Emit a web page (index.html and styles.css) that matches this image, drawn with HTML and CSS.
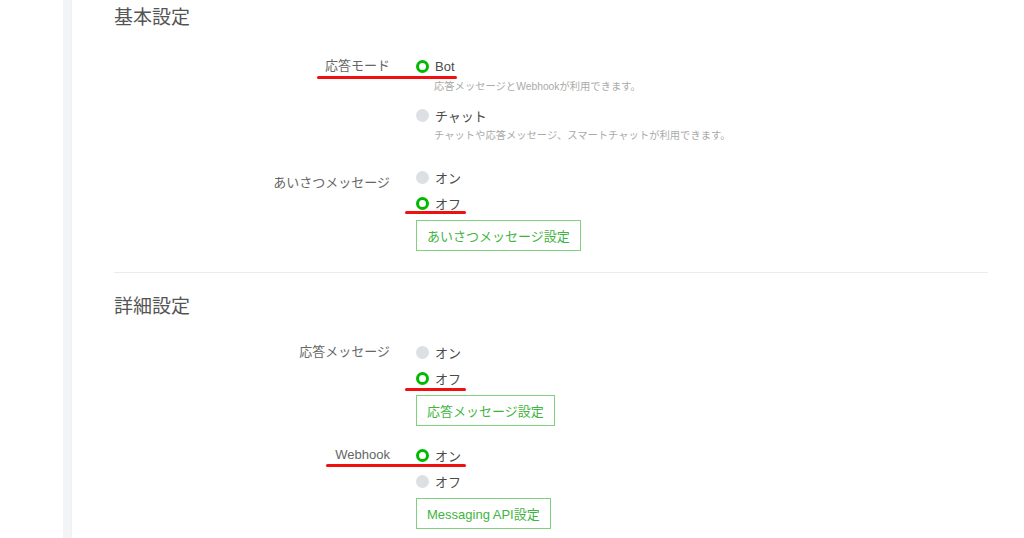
FILE: index.html
```html
<!DOCTYPE html>
<html lang="ja">
<head>
    <meta charset="UTF-8">
    <meta name="viewport" content="width=device-width, initial-scale=1.0">
    <title>応答設定</title>
    <link rel="stylesheet" href="styles.css">
</head>
<body>
    <div class="page">
        <div class="gutter"></div>
        <div class="rail"></div>
        <main class="main">
            <section class="section">
                <h2 class="section-title">基本設定</h2>

                <div class="field">
                    <div class="field-label">応答モード</div>
                    <div class="options">
                        <div class="option"><span class="radio checked"></span>Bot</div>
                        <div class="desc">応答メッセージとWebhookが利用できます。</div>
                        <div class="option"><span class="radio"></span>チャット</div>
                        <div class="desc">チャットや応答メッセージ、スマートチャットが利用できます。</div>
                    </div>
                    <span class="mark mark-row"></span>
                </div>

                <div class="field">
                    <div class="field-label field-label-low">あいさつメッセージ</div>
                    <div class="options">
                        <div class="option"><span class="radio"></span>オン</div>
                        <div class="option"><span class="radio checked"></span>オフ<span class="mark mark-option"></span></div>
                        <button class="btn">あいさつメッセージ設定</button>
                    </div>
                </div>
            </section>

            <section class="section section-next">
                <h2 class="section-title">詳細設定</h2>

                <div class="field">
                    <div class="field-label">応答メッセージ</div>
                    <div class="options">
                        <div class="option"><span class="radio"></span>オン</div>
                        <div class="option"><span class="radio checked"></span>オフ<span class="mark mark-option mark-option-low"></span></div>
                        <button class="btn">応答メッセージ設定</button>
                    </div>
                </div>

                <div class="field">
                    <div class="field-label">Webhook</div>
                    <div class="options">
                        <div class="option"><span class="radio checked"></span>オン</div>
                        <div class="option"><span class="radio"></span>オフ</div>
                        <button class="btn">Messaging API設定</button>
                    </div>
                    <span class="mark mark-row mark-row-webhook"></span>
                </div>
            </section>
        </main>
    </div>
</body>
</html>
```

FILE: styles.css
```css
body {
    margin: 0;
    background-color: #fff;
    font-family: "Liberation Sans", "Noto Sans CJK JP", sans-serif;
    color: #444;
}
.page {
    display: flex;
    min-height: 538px;
}
.gutter {
    width: 63px;
    flex-shrink: 0;
}
.rail {
    width: 9px;
    flex-shrink: 0;
    background-color: #f3f4f6;
    border-right: 1px solid #eef0f2;
    box-sizing: border-box;
}
.main {
    flex: 1;
    padding: 4px 36px 0 42px;
}
.section-title {
    margin: 0;
    font-size: 19px;
    font-weight: normal;
    line-height: 28px;
    color: #555;
}
.section {
    padding-bottom: 21px;
}
.section-next {
    border-top: 1px solid #ebebeb;
    padding-top: 20px;
}
.field {
    position: relative;
    display: grid;
    grid-template-columns: 276px 1fr;
    column-gap: 26px;
    margin-top: 19px;
}
.section-title + .field {
    margin-top: 24px;
}
.section-next .section-title + .field {
    margin-top: 21px;
}
.field-label {
    text-align: right;
    font-size: 13px;
    line-height: 20px;
    color: #666;
}
.field-label-low {
    padding-top: 6px;
}
.options {
    display: flex;
    flex-direction: column;
    align-items: flex-start;
}
.option {
    position: relative;
    display: flex;
    align-items: center;
    gap: 6px;
    height: 20px;
    font-size: 13px;
    color: #4a4a4a;
}
.option + .option {
    margin-top: 6px;
}
.desc + .option {
    margin-top: 6px;
}
.radio {
    width: 13px;
    height: 13px;
    border-radius: 50%;
    background-color: #dcdfe4;
    box-sizing: border-box;
}
.radio.checked {
    background-color: #fff;
    border: 3.5px solid #00b900;
}
.desc {
    margin: 3px 0 4px 18px;
    font-size: 10.3px;
    line-height: 16px;
    color: #aaa;
}
.btn {
    margin-top: 7px;
    height: 31px;
    padding: 0 10px;
    background-color: #fff;
    border: 1px solid #7fd07f;
    font-family: inherit;
    font-size: 13px;
    color: #3fb43f;
    cursor: pointer;
}
.mark {
    position: absolute;
    height: 3px;
    border-radius: 2px;
    background-color: #f01010;
}
.mark-row {
    top: 20px;
    left: 203px;
    width: 140px;
}
.mark-row-webhook {
    top: 19px;
    left: 212px;
}
.mark-option {
    top: 18px;
    left: -11px;
    width: 61px;
}
.mark-option-low {
    top: 20px;
}
```
